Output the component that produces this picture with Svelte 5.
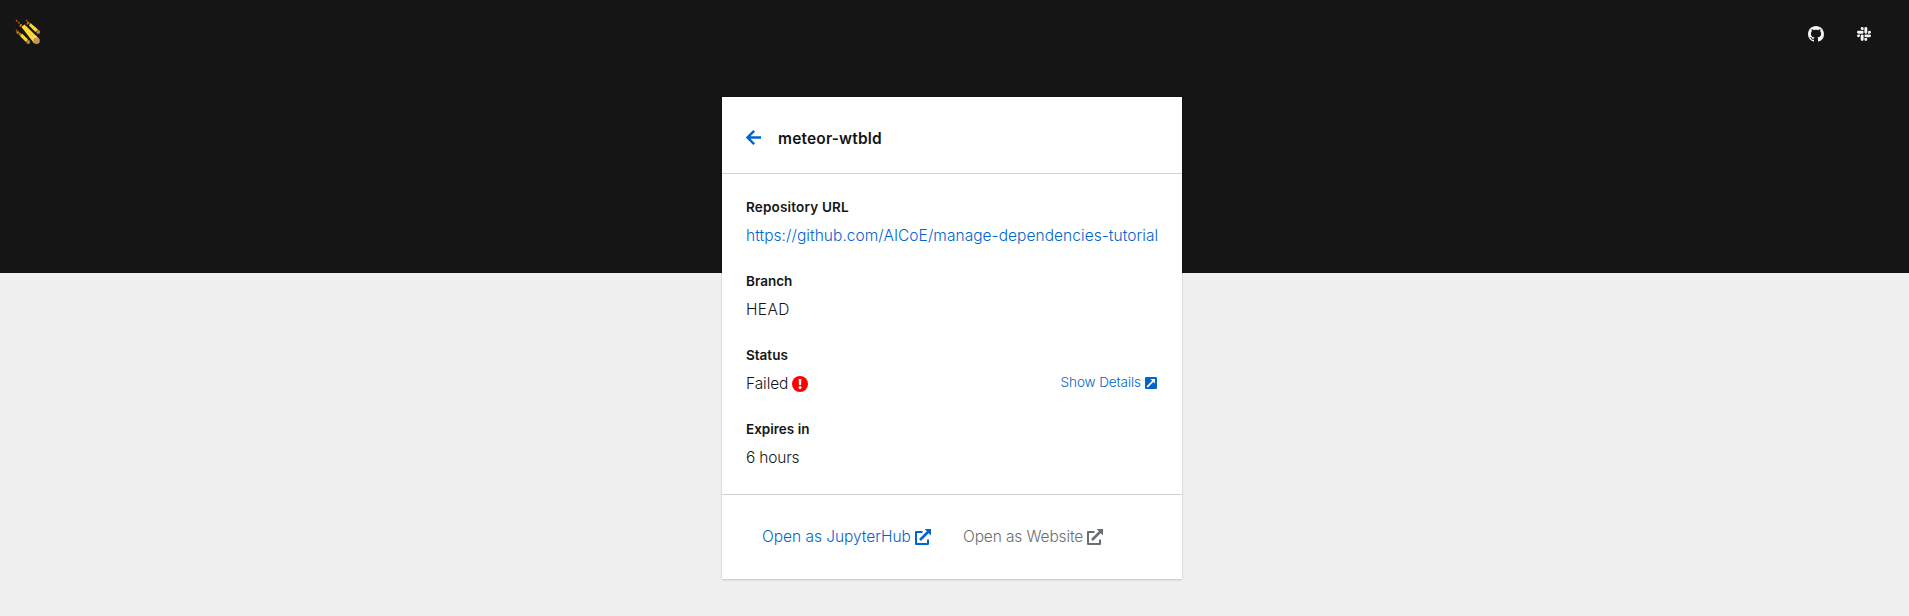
<script>
  const repo = 'https://github.com/AICoE/manage-dependencies-tutorial';
</script>

{#snippet external()}
  <svg class="external" viewBox="0 0 16 16" aria-hidden="true">
    <path fill="none" stroke="currentColor" stroke-width="2" stroke-linejoin="round" d="M7.5 3H1v12h12v-4.5" />
    <path fill="none" stroke="currentColor" stroke-width="2.7" d="M5 11 13.5 2.5" />
    <path fill="currentColor" d="M9.6 0H16v6.4z" />
  </svg>
{/snippet}

<div class="page">
  <header>
    <a class="logo" href="#home" aria-label="Meteor">
      <svg viewBox="0 0 26 26">
        <g fill="none">
          <path stroke="#a85a13" stroke-width="1.5" stroke-dasharray="2 1" d="M1 2 8 9M11 2l5 5M1 12l5 5" />
          <path stroke="#d98a16" stroke-width="2.6" stroke-dasharray="1.5 1.3" d="M5 7l4 3M12 5l4 2M2 14l4 3" />
        </g>
        <path fill="#ffdc32" d="m6.5 9 3-2.5L23.8 20.4 18.8 25z" />
        <path fill="#ffdc32" d="m14 7.5 2-2 7 6-2.5 2.5zM5 18l2-2.5 6 6-2 2.5z" />
        <path fill="none" stroke="#e7ae1d" stroke-width=".7" stroke-dasharray="1 2" d="M9 10l10 10M16 7l5 5M6 17l5 5" />
        <path fill="#f3dfbd" d="m17.5 20.5 3.5-3 1.5 2-3.5 3z" />
        <circle cx="21.5" cy="22.7" r="3.3" fill="#c9935c" />
        <circle cx="13.2" cy="24" r="1.9" fill="#b8834f" />
        <circle cx="23.2" cy="14" r="1.9" fill="#b8834f" />
      </svg>
    </a>
    <nav>
      <a href="#github" aria-label="GitHub">
        <svg viewBox="0 0 16 16" fill="currentColor"><path d="M8 0C3.58 0 0 3.58 0 8c0 3.54 2.29 6.53 5.47 7.59.4.07.55-.17.55-.38 0-.19-.01-.82-.01-1.49-2.01.37-2.53-.49-2.69-.94-.09-.23-.48-.94-.82-1.13-.28-.15-.68-.52-.01-.53.63-.01 1.08.58 1.23.82.72 1.21 1.87.87 2.33.66.07-.52.28-.87.51-1.07-1.78-.2-3.64-.89-3.64-3.95 0-.87.31-1.59.82-2.15-.08-.2-.36-1.02.08-2.12 0 0 .67-.21 2.2.82.64-.18 1.32-.27 2-.27s1.36.09 2 .27c1.53-1.04 2.2-.82 2.2-.82.44 1.1.16 1.92.08 2.12.51.56.82 1.27.82 2.15 0 3.07-1.87 3.75-3.65 3.95.29.25.54.73.54 1.48 0 1.07-.01 1.93-.01 2.2 0 .21.15.46.55.38A8.01 8.01 0 0 0 16 8c0-4.42-3.58-8-8-8z" /></svg>
      </a>
      <a href="#slack" aria-label="Slack">
        <svg class="slack" viewBox="0 32 448 448" fill="currentColor"><path d="M94 315a47 47 0 1 1-47-47h47zm24 0a47 47 0 0 1 94 0v118a47 47 0 0 1-94 0zm47-189a47 47 0 1 1 47-47v47zm0 24a47 47 0 0 1 0 94H47a47 47 0 0 1 0-94zm189 47a47 47 0 1 1 47 47h-47zm-24 0a47 47 0 0 1-94 0V79a47 47 0 0 1 94 0zm-47 189a47 47 0 1 1-47 47v-47zm0-24a47 47 0 0 1 0-94h118a47 47 0 0 1 0 94z" /></svg>
      </a>
    </nav>
  </header>

  <main class="card">
    <div class="heading">
      <a href="#back" aria-label="Back">
        <svg class="arrow" viewBox="0 0 14 14"><path fill="none" stroke="currentColor" stroke-width="2.3" d="M7.6 .9 1.5 7l6.1 6.1M1.8 7H14" /></svg>
      </a>
      <h1>meteor-wtbld</h1>
    </div>

    <dl>
      <div>
        <dt class="repo-label">Repository URL</dt>
        <dd><a class="repo" href={repo}>{repo}</a></dd>
      </div>
      <div>
        <dt>Branch</dt>
        <dd class="branch">HEAD</dd>
      </div>
      <div>
        <dt>Status</dt>
        <dd class="status">
          <span class="failed">Failed</span>
          <svg class="alert" viewBox="0 0 16 16"><circle cx="8" cy="8" r="8" fill="red" /><path fill="#fff" d="M6.6 3h2.8L9 9H7z" /><circle cx="8" cy="11.5" r="1.5" fill="#fff" /></svg>
          <a class="details" href="#details">
            <span>Show Details</span>
            <svg viewBox="0 0 12 12"><rect width="12" height="12" rx="1.2" fill="currentColor" /><path fill="none" stroke="#fff" stroke-width="1.7" d="m2.2 9.8 6-6" /><path fill="#fff" d="M5.4 2H10v4.6z" /></svg>
          </a>
        </dd>
      </div>
      <div>
        <dt>Expires in</dt>
        <dd class="hours">6 hours</dd>
      </div>
    </dl>

    <footer>
      <a class="jupyter" href="#jupyterhub"><span>Open as JupyterHub</span>{@render external()}</a>
      <span class="website"><span>Open as Website</span>{@render external()}</span>
    </footer>
  </main>
</div>

<style>
  :global(body) { margin: 0; }
  .page {
    box-sizing: border-box;
    height: 616px;
    overflow: hidden;
    background: linear-gradient(#151515 273px, #f0f0f0 273px);
    color: #151515;
    font: 350 15.5px/24px Inter, "Open Sans", sans-serif;
  }
  a { color: #06c; text-decoration: none; }
  svg { display: block; flex: none; }
  header {
    box-sizing: border-box;
    height: 97px;
    padding: 18px 20px 0 15px;
    display: flex;
    justify-content: space-between;
    align-items: flex-start;
  }
  .logo svg { width: 26px; height: 26px; }
  nav { display: flex; padding-top: 8px; }
  nav a { width: 16px; padding: 0 16px; color: #f4f4f4; }
  nav a + a { width: 17px; }
  nav svg { width: 16px; height: 16px; }
  nav .slack { width: 14px; height: 14px; margin: 1px; }
  .card {
    width: 460px;
    height: 482px;
    margin: 0 0 0 722px;
    background: #fff;
    box-shadow: 0 1px 2px rgba(3, 3, 3, .16), 0 0 2px rgba(3, 3, 3, .08);
  }
  .heading {
    box-sizing: border-box;
    height: 77px;
    padding: 5px 25px 0 24px;
    display: flex;
    align-items: center;
    gap: 17px;
    border-bottom: 1px solid #d2d2d2;
  }
  .arrow { width: 15px; height: 15px; }
  h1 { margin: 0; padding-top: 2px; font-size: 15.5px; font-weight: 600; line-height: 24px; letter-spacing: .18px; white-space: nowrap; }
  dl {
    margin: 0;
    padding: 24px;
    display: flex;
    flex-direction: column;
    gap: 24px;
  }
  dt { margin-bottom: 8px; font-size: 13.5px; line-height: 18px; font-weight: 600; }
  .repo-label { letter-spacing: .18px; }
  dd { margin: 0; height: 24px; white-space: nowrap; }
  .repo { letter-spacing: .05px; }
  .branch { letter-spacing: .4px; }
  .hours { letter-spacing: -.2px; }
  .status { display: flex; align-items: center; }
  .alert { width: 16px; height: 16px; margin: 0 0 1px 4px; }
  .failed { width: 42px; letter-spacing: -.08px; }
  .details { margin-left: auto; display: flex; align-items: center; gap: 4px; font-size: 13.5px; letter-spacing: -.08px; margin-right: 1px; line-height: 21px; padding-bottom: 3px; }
  .details svg { width: 12px; height: 12px; }
  footer {
    box-sizing: border-box;
    height: 85px;
    padding: 0 40px;
    display: flex;
    align-items: center;
    border-top: 1px solid #d2d2d2;
    white-space: nowrap;
  }
  footer > * { display: flex; align-items: center; }
  .jupyter > span { width: 153px; letter-spacing: -.03px; }
  .website { margin-left: 32px; color: #6a6e73; }
  .website > span { width: 124px; letter-spacing: -.12px; }
  .external { width: 16px; height: 16px; margin-bottom: 1px; }
</style>
